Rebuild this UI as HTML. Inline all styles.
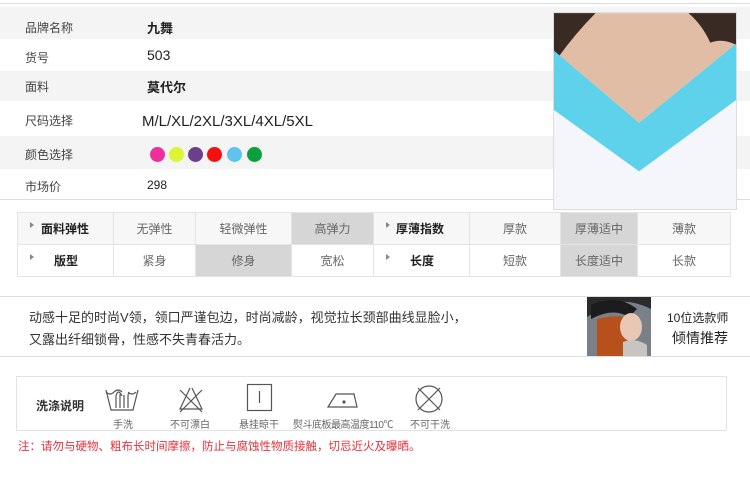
<!DOCTYPE html>
<html><head><meta charset="utf-8"><style>
*{margin:0;padding:0;box-sizing:border-box}
body{width:750px;height:480px;background:#fff;position:relative;overflow:hidden;font-family:"Liberation Sans","Noto Sans CJK SC",sans-serif;color:#333}
.a{position:absolute;white-space:nowrap}
.row{position:absolute;left:0;width:750px}
.lab{position:absolute;left:25px;font-size:12px;color:#444}
.val{position:absolute;left:147px;font-size:13px;color:#222}
.dot{position:absolute;top:147px;width:15px;height:15px;border-radius:50%}
table{position:absolute;left:17px;top:212px;border-collapse:collapse;font-size:12px;color:#666}
td{border:1px solid #e4e4e4;height:32px;text-align:center;padding:0}
td.h{text-align:left;color:#222;font-weight:bold;position:relative}
td.s{background:#d6d6d6}
tr.r1{background:#f7f7f7}
.tri{display:inline-block;width:0;height:0;border-left:4px solid #888;border-top:3px solid transparent;border-bottom:3px solid transparent;position:absolute;left:12px;top:9px}
.wl{position:absolute;top:416px;font-size:10px;color:#666;text-align:center;white-space:nowrap}
</style></head><body>
<div class="row" style="top:3px;height:1px;background:#ddd"></div>
<div class="row" style="top:7px;height:32px;background:#f4f4f4"></div>
<div class="row" style="top:71px;height:30px;background:#f4f4f4"></div>
<div class="row" style="top:136px;height:33px;background:#f4f4f4"></div>
<div class="row" style="top:199px;height:1px;background:#ddd"></div>
<div class="lab" style="top:19px">品牌名称</div><div class="val" style="top:18px;font-weight:bold">九舞</div>
<div class="lab" style="top:49px">货号</div><div class="val" style="top:47px;font-size:14px">503</div>
<div class="lab" style="top:78px">面料</div><div class="val" style="top:77px;font-weight:bold">莫代尔</div>
<div class="lab" style="top:112px">尺码选择</div><div class="val" style="top:113px;left:142px;font-size:15px">M/L/XL/2XL/3XL/4XL/5XL</div>
<div class="lab" style="top:146px">颜色选择</div>
<div class="dot" style="left:150px;background:#f0309a"></div>
<div class="dot" style="left:169px;background:#dcf534"></div>
<div class="dot" style="left:188px;background:#6c3f8a"></div>
<div class="dot" style="left:207px;background:#f51010"></div>
<div class="dot" style="left:227px;background:#5ec4ec"></div>
<div class="dot" style="left:247px;background:#0aa040"></div>
<div class="lab" style="top:178px">市场价</div><div class="val" style="top:178px;font-size:12px">298</div>
<svg class="a" style="left:553px;top:12px;border:1px solid #ddd" width="184" height="198" viewBox="0 0 184 198">
<rect width="184" height="198" fill="#f5f6fb"/>
<path d="M0 0H184V31L86 111L0 38Z" fill="#e2bda6"/>
<path d="M0 0H42Q22 20 4 45L0 40Z" fill="#3a2a24"/>
<path d="M136 0H184V32Q170 25 158 30Q150 12 136 0Z" fill="#3a2a24"/>
<path d="M0 38L86 111L184 31V88L86 160L0 98Z" fill="#5ed2ea"/>
</svg>
<table>
<colgroup><col width="96"><col width="82"><col width="96"><col width="82"><col width="96"><col width="91"><col width="77"><col width="93"></colgroup>
<tr class="r1"><td class="h"><span class="tri"></span><span style="padding-left:23px">面料弹性</span></td><td>无弹性</td><td>轻微弹性</td><td class="s">高弹力</td><td class="h"><span class="tri"></span><span style="padding-left:22px">厚薄指数</span></td><td>厚款</td><td class="s">厚薄适中</td><td>薄款</td></tr>
<tr><td class="h"><span class="tri"></span><span style="padding-left:36px">版型</span></td><td>紧身</td><td class="s">修身</td><td>宽松</td><td class="h"><span class="tri"></span><span style="padding-left:36px">长度</span></td><td>短款</td><td class="s">长度适中</td><td>长款</td></tr>
</table>
<div class="row" style="top:296px;height:1px;background:#ddd"></div>
<div class="row" style="top:356px;height:1px;background:#ddd"></div>
<div class="a" style="left:29px;top:307px;font-size:13px;color:#333">动感十足的时尚V领，领口严谨包边，时尚减龄，视觉拉长颈部曲线显脸小，</div>
<div class="a" style="left:29px;top:329px;font-size:13px;color:#333">又露出纤细锁骨，性感不失青春活力。</div>
<svg class="a" style="left:587px;top:297px" width="64" height="59" viewBox="0 0 64 59">
<rect width="64" height="59" fill="#7a8088"/>
<path d="M0 0H64V12Q40 0 20 8L0 20Z" fill="#2b2b2e"/>
<path d="M4 8Q30 -4 50 12L42 20Q26 10 4 22Z" fill="#1c1c1e"/>
<path d="M10 22Q25 18 40 20L40 59H10Z" fill="#b8501c"/>
<ellipse cx="44" cy="30" rx="11" ry="14" fill="#e8c7b4"/>
<path d="M36 45Q48 40 60 48V59H36Z" fill="#c8c4c0"/>
</svg>
<div class="a" style="left:667px;top:309px;font-size:12px;color:#222">10位选款师</div>
<div class="a" style="left:672px;top:328px;font-size:14px;color:#222">倾情推荐</div>
<div class="a" style="left:16px;top:376px;width:711px;height:55px;border:1px solid #e2e2e2"></div>
<div class="a" style="left:36px;top:397px;font-size:12px;font-weight:bold;color:#333">洗涤说明</div>
<svg class="a" style="left:100px;top:382px" width="360" height="34" viewBox="0 0 360 34" fill="none" stroke="#555" stroke-width="1.2">
<path d="M6 8L11 28H33L38 8"/><path d="M6 10Q10 14 14 10Q18 6 22 10M28 10Q32 14 36 10"/>
<path d="M16 26V14Q18 6 22 14M20 26V12M24 26V13M28 26V14Q28 10 31 12"/>
<path d="M90 6L80 27H102L92 6M80 8L102 30M102 8L80 30"/>
<rect x="147.5" y="2.5" width="24" height="26"/><path d="M159.5 9V21"/>
<path d="M228 25L236 12H254L257 25Z"/><circle cx="244" cy="20" r="1" fill="#555"/>
<circle cx="329" cy="17" r="13"/><path d="M318 6L340 28M340 6L318 28"/>
</svg>
<div class="wl" style="left:108px;width:30px">手洗</div>
<div class="wl" style="left:168px;width:44px">不可漂白</div>
<div class="wl" style="left:237px;width:44px">悬挂晾干</div>
<div class="wl" style="left:290px;width:106px;letter-spacing:-0.5px">熨斗底板最高温度110℃</div>
<div class="wl" style="left:408px;width:44px">不可干洗</div>
<div class="a" style="left:18px;top:438px;font-size:11.5px;color:#e8303c">注：请勿与硬物、粗布长时间摩擦，防止与腐蚀性物质接触，切忌近火及曝晒。</div>
</body></html>
